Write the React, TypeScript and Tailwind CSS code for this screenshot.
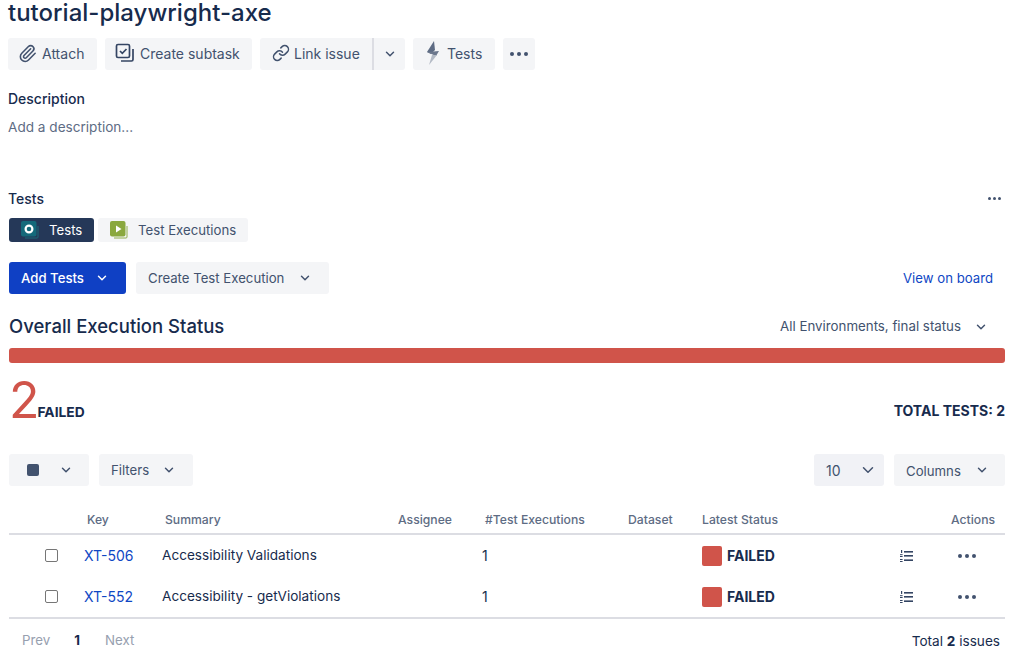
import { ChevronDown, Link, Paperclip } from "lucide-react";
import type { ReactNode } from "react";

const rows = [
  { key: "XT-506", summary: "Accessibility Validations" },
  { key: "XT-552", summary: "Accessibility - getViolations" },
];

const gridCols = "grid grid-cols-[75px_81px_230px_90px_143px_74px_197px_1fr]";

function Chevron({ className = "" }: { className?: string }) {
  return <ChevronDown className={`h-[14px] w-[14px] ${className}`} strokeWidth={2.5} />;
}

function Dots() {
  return (
    <span className="flex items-center gap-[3px]">
      <span className="h-1 w-1 rounded-full bg-[#42526e]" />
      <span className="h-1 w-1 rounded-full bg-[#42526e]" />
      <span className="h-1 w-1 rounded-full bg-[#42526e]" />
    </span>
  );
}

function ToolButton({ icon, label, className = "" }: { icon: ReactNode; label: string; className?: string }) {
  return (
    <div className={`flex h-8 items-center rounded-[3px] bg-[#f4f5f7] pb-[2px] text-[14px] font-normal text-[#42526e] ${className}`}>
      {icon}
      <span>{label}</span>
    </div>
  );
}

function SubtaskIcon() {
  return (
    <svg viewBox="0 0 20 20" className="mr-[5px] h-5 w-5" fill="none" stroke="#344563" strokeWidth="1.7">
      <rect x="1.5" y="1.5" width="13" height="13" rx="1.5" />
      <path d="M5 8l2.3 2.3L11.5 6" />
      <path d="M18 6v10.5a1.5 1.5 0 0 1-1.5 1.5H6" />
    </svg>
  );
}

function BoltIcon() {
  return (
    <svg viewBox="0 0 14 26" className="mr-[7px] h-[26px] w-[14px]">
      <path d="M8 1 1 12l4 2 4-4z" fill="#5e6c84" />
      <path d="M1 12l12-1-3 5z" fill="#6b778c" />
      <path d="M6 15h5L3 25z" fill="#b3bac5" />
    </svg>
  );
}

function TestsTabIcon() {
  return (
    <svg viewBox="0 0 18 18" className="h-[18px] w-[18px]">
      <path d="M4 17h12a1 1 0 0 0 1-1V5" fill="none" stroke="#1a6a78" strokeWidth="1" />
      <rect x="0" y="0" width="15.5" height="15.5" rx="2" fill="#14697a" />
      <circle cx="8" cy="8" r="3.4" fill="none" stroke="#ffffff" strokeWidth="2.2" />
    </svg>
  );
}

function ExecutionsTabIcon() {
  return (
    <svg viewBox="0 0 18 18" className="h-[18px] w-[18px]">
      <path d="M4 17h12a1 1 0 0 0 1-1V5" fill="none" stroke="#8fae4a" strokeWidth="1" />
      <rect x="0" y="0" width="15.5" height="15.5" rx="2" fill="#8aa83e" />
      <path d="M6 4.5v7l5.5-3.5z" fill="#ffffff" />
    </svg>
  );
}

function OrderedListIcon() {
  return (
    <svg viewBox="0 0 13 12" className="h-3 w-[13px]" fill="#344563">
      <rect x="4" y="1" width="9" height="1.6" />
      <rect x="4" y="5" width="9" height="1.6" />
      <rect x="4" y="9.4" width="9" height="1.6" />
      <rect x="1" y="0" width="1.2" height="3" />
      <rect x="0" y="4.2" width="2.6" height="1" />
      <rect x="0" y="6" width="2.6" height="1" />
      <rect x="0" y="9" width="2.6" height="1" />
      <rect x="0" y="11" width="2.6" height="1" />
    </svg>
  );
}

export default function App() {
  return (
    <div className="h-[655px] w-[1020px] overflow-hidden bg-white font-['Inter',sans-serif] text-[#172b4d]">
      <h1 className="h-[38px] pl-2 text-[24px] font-medium leading-[26px]">tutorial-playwright-axe</h1>

      <div className="flex gap-2 pl-2">
        <ToolButton icon={<Paperclip className="mr-[5px] h-[19px] w-[19px] text-[#42526e]" strokeWidth={2} />} label="Attach" className="w-[89px] pl-[10px]" />
        <ToolButton icon={<SubtaskIcon />} label="Create subtask" className="w-[147px] pl-[10px]" />
        <div className="flex h-8 w-[145px] rounded-[3px] bg-[#f4f5f7] text-[14px] text-[#42526e]">
          <div className="flex w-[112px] items-center pb-[2px] pl-[12px]">
            <Link className="mr-[4px] h-[18px] w-[18px]" strokeWidth={2} />
            <span>Link issue</span>
          </div>
          <div className="flex flex-1 items-center justify-center border-l-2 border-[#dcdde3]">
            <Chevron />
          </div>
        </div>
        <ToolButton icon={<BoltIcon />} label="Tests" className="w-[82px] pl-[13px]" />
        <div className="flex h-8 w-8 items-center justify-center rounded-[3px] bg-[#f4f5f7]">
          <Dots />
        </div>
      </div>

      <div className="mt-[19px] pl-2 text-[14px] font-medium leading-[20px]">Description</div>
      <div className="mt-2 pl-2 text-[13.6px] leading-[20px] text-[#5e6c84]">Add a description...</div>

      <div className="mt-[52px] flex h-5 items-center justify-between pb-[1px] pl-2 pr-[19px]">
        <span className="text-[14px] font-medium">Tests</span>
        <span className="flex items-center gap-[2px]">
          <span className="h-[3px] w-[3px] rounded-full bg-[#42526e]" />
          <span className="h-[3px] w-[3px] rounded-full bg-[#42526e]" />
          <span className="h-[3px] w-[3px] rounded-full bg-[#42526e]" />
        </span>
      </div>

      <div className="mt-[9px] flex gap-1 pl-[9px]">
        <div className="flex h-6 w-[85px] items-center gap-[10px] rounded-[3px] bg-[#253858] pl-3 text-[13.2px] text-white">
          <TestsTabIcon />
          <span className="pt-[1px]">Tests</span>
        </div>
        <div className="flex h-6 w-[150px] items-center gap-[10px] rounded-[3px] bg-[#f4f5f7] pl-3 text-[13.2px] text-[#42526e]">
          <ExecutionsTabIcon />
          <span className="pt-[1px]">Test Executions</span>
        </div>
      </div>

      <div className="mt-5 flex items-center pl-[9px] pr-[27px]">
        <div className="flex h-8 w-[117px] items-center rounded-[3px] bg-[#0f40c4] pl-3 text-[13.2px] font-medium text-white">
          <span className="pt-[2px]">Add Tests</span>
          <Chevron className="ml-[11px]" />
        </div>
        <div className="ml-[10px] flex h-8 w-[193px] items-center rounded-[3px] bg-[#f4f5f7] pl-3 text-[13.2px] text-[#42526e]">
          <span className="pt-[2px]">Create Test Execution</span>
          <Chevron className="ml-[14px]" />
        </div>
        <span className="ml-auto pt-[2px] text-[13.2px] text-[#0f47c4]">View on board</span>
      </div>

      <div className="mt-[19px] flex h-[26px] items-center justify-between pl-[9px] pr-[32px] pt-[2px]">
        <h2 className="text-[18.5px] font-medium">Overall Execution Status</h2>
        <div className="flex items-center gap-[13px] text-[13.3px] text-[#42526e]">
          <span>All Environments, final status</span>
          <Chevron />
        </div>
      </div>

      <div className="ml-[9px] mt-[9px] h-[15px] w-[996px] rounded-[3px] bg-[#d0544a]" />

      <div className="mt-[13px] flex h-[48px] items-end justify-between pl-[9px] pr-[15px]">
        <div className="flex items-end">
          <span className="text-[50px] font-normal leading-[48px] text-[#d0544a]">2</span>
          <span className="-ml-[2px] mb-[2px] text-[13.8px] font-bold leading-[20px]">FAILED</span>
        </div>
        <span className="mb-[3px] text-[14px] font-bold leading-[20px]">TOTAL TESTS: 2</span>
      </div>

      <div className="mt-[30px] flex items-center pl-[9px] pr-[15px]">
        <div className="flex h-8 w-[80px] items-center rounded-[3px] bg-[#f4f5f7] pl-[18px]">
          <span className="h-3 w-3 rounded-[2px] bg-[#42526e]" />
          <Chevron className="ml-[20px] text-[#42526e]" />
        </div>
        <div className="ml-[10px] flex h-8 w-[94px] items-center rounded-[3px] bg-[#f4f5f7] pl-3 text-[13.2px] text-[#42526e]">
          <span className="pt-[2px]">Filters</span>
          <Chevron className="ml-[13px]" />
        </div>
        <div className="ml-auto flex h-8 w-[70px] items-center justify-between rounded-[3px] bg-[#f1f2f6] pl-3 pr-[7px] text-[14px] text-[#42526e]">
          <span className="pt-[1px]">10</span>
          <ChevronDown className="h-[18px] w-[18px]" strokeWidth={2} />
        </div>
        <div className="ml-[10px] flex h-8 w-[111px] items-center rounded-[3px] bg-[#f4f5f7] pl-3 text-[13.2px] text-[#42526e]">
          <span className="pt-[3px]">Columns</span>
          <Chevron className="ml-[14px]" />
        </div>
      </div>

      <div className={`${gridCols} ml-[9px] mt-[25px] h-[24px] w-[996px] items-start border-b-2 border-[#dcdde3] text-[12.2px] font-medium leading-[18px] text-[#5e6c84]`}>
        <span />
        <span className="pl-[3px]">Key</span>
        <span>Summary</span>
        <span className="pl-[3px]">Assignee</span>
        <span>#Test Executions</span>
        <span>Dataset</span>
        <span>Latest Status</span>
        <span className="pl-[52px]">Actions</span>
      </div>

      {rows.map((row) => (
        <div key={row.key} className={`${gridCols} ml-[9px] h-[41px] w-[996px] items-center text-[14px]`}>
          <span className="flex justify-end pr-[26px]">
            <span className="h-[13px] w-[13px] rounded-[2px] border border-[#767676] bg-white" />
          </span>
          <span className="text-[#0f47c4]">{row.key}</span>
          <span className="col-span-2 -ml-[3px] text-[13.6px]">{row.summary}</span>
          <span className="-ml-[3px]">1</span>
          <span />
          <span className="flex items-center gap-[5px]">
            <span className="h-5 w-5 rounded-[2px] bg-[#d0544a]" />
            <span className="pb-[1px] font-bold">FAILED</span>
          </span>
          <span className="flex items-center">
            <span className="ml-[1px]">
              <OrderedListIcon />
            </span>
            <span className="ml-[45px]">
              <Dots />
            </span>
          </span>
        </div>
      ))}

      <div className="ml-[9px] flex h-[46px] w-[996px] items-center justify-between border-t-2 border-[#dcdde3] pr-[5px] text-[13.3px]">
        <div className="flex items-center">
          <span className="ml-[13px] text-[#97a0af]">Prev</span>
          <span className="ml-[24px] font-bold text-[#172b4d]">1</span>
          <span className="ml-[25px] text-[#97a0af]">Next</span>
        </div>
        <span className="text-[13.6px]">
          Total <span className="font-bold">2</span> issues
        </span>
      </div>
    </div>
  );
}
